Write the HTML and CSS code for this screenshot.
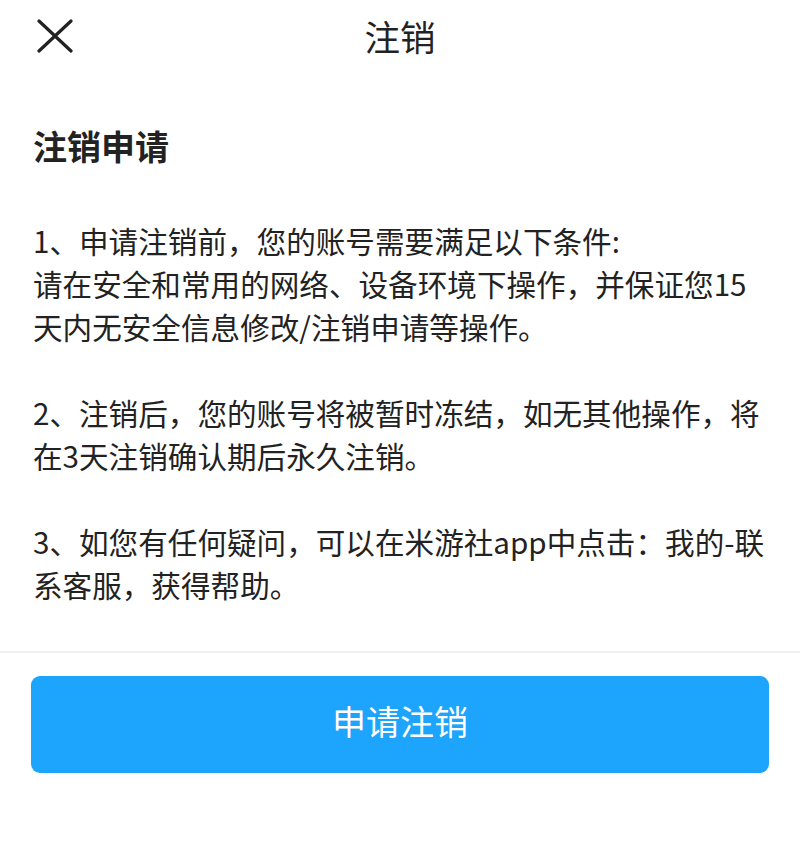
FILE: index.html
```html
<!DOCTYPE html>
<html lang="zh-CN">
<head>
<meta charset="utf-8">
<title>注销</title>
<link rel="stylesheet" href="styles.css">
</head>
<body>
<div class="page">
  <header class="topbar">
    <button class="close" aria-label="关闭">
      <svg viewBox="0 0 36 34" width="36" height="34">
        <path d="M2 2 L34 32 M34 2 L2 32" stroke="#222" stroke-width="3.2" stroke-linecap="round" fill="none"/>
      </svg>
    </button>
    <h1 class="title">注销</h1>
  </header>

  <main class="content">
    <h2 class="heading">注销申请</h2>
    <p class="para">1、申请注销前，您的账号需要满足以下条件:<br>请在安全和常用的网络、设备环境下操作，并保证您15天内无安全信息修改/注销申请等操作。</p>
    <p class="para">2、注销后，您的账号将被暂时冻结，如无其他操作，将在3天注销确认期后永久注销。</p>
    <p class="para">3、如您有任何疑问，可以在米游社app中点击：我的-联系客服，获得帮助。</p>
  </main>

  <footer class="footer">
    <button class="submit">申请注销</button>
  </footer>
</div>
</body>
</html>
```

FILE: styles.css
```css
* { box-sizing: border-box; }

html, body {
  margin: 0;
  padding: 0;
  background: #ffffff;
}

body {
  font-family: "Noto Sans CJK SC", "Noto Sans", sans-serif;
  color: #222222;
}

.page {
  width: 800px;
  height: 860px;
  display: flex;
  flex-direction: column;
}

.topbar {
  position: relative;
  height: 80px;
  display: flex;
  align-items: center;
  justify-content: center;
}

.close {
  position: absolute;
  left: 37px;
  top: 19px;
  width: 36px;
  height: 34px;
  padding: 0;
  border: 0;
  background: none;
  display: block;
}

.close svg { display: block; }

.title {
  margin: 0;
  margin-top: -9px;
  font-size: 35.5px;
  font-weight: 400;
  color: #222222;
}

.content {
  padding: 43px 33px 0 33px;
  flex: 1;
}

.heading {
  margin: 0 0 50px 0;
  font-size: 34px;
  font-weight: 700;
  line-height: 46px;
}

.para {
  margin: 0 0 43px 0;
  font-size: 29.6px;
  line-height: 43px;
  color: #222222;
}

.footer {
  border-top: 2px solid #f0f0f0;
  height: 209px;
  padding: 23px 31px 0 31px;
}

.submit {
  width: 738px;
  height: 97px;
  border: 0;
  border-radius: 9px;
  background: #1da4fd;
  color: #ffffff;
  font-family: "Noto Sans CJK SC", "Noto Sans", sans-serif;
  font-size: 34px;
  font-weight: 400;
  display: flex;
  align-items: center;
  justify-content: center;
  padding: 0 0 8px 0;
}
```
